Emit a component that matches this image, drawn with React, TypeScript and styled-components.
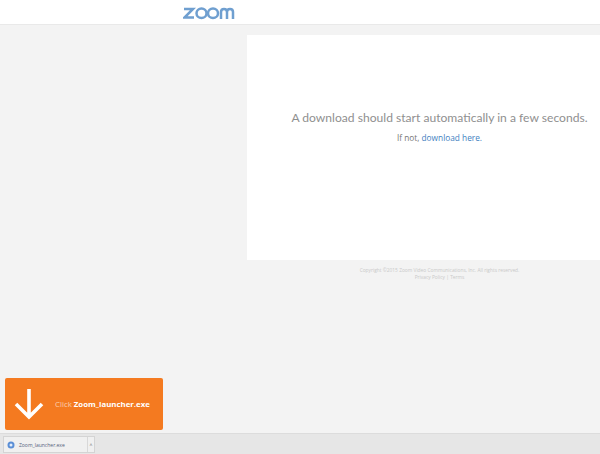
import React from "react";
import styled, { createGlobalStyle } from "styled-components";

const Global = createGlobalStyle`
  html, body { margin: 0; padding: 0; width: 600px; height: 454px; overflow: hidden; background: #f3f3f3; }
  #root { width: 600px; height: 454px; }
`;

const Page = styled.div`
  position: relative;
  width: 600px;
  height: 454px;
  display: flex;
  flex-direction: column;
  background: #f3f3f3;
  font-family: "Open Sans", "Liberation Sans", sans-serif;
`;

const Header = styled.header`
  flex: none;
  background: #fff;
  border-bottom: 1px solid #e9e9e9;
  padding: 3px 0 0 183px;
  box-sizing: content-box;
  height: 21px;
`;

const Main = styled.main`
  flex: 1;
  padding: 10px 0 0 247px;
  display: flex;
  flex-direction: column;
`;

const Card = styled.section`
  height: 225px;
  background: #fff;
  display: flex;
  flex-direction: column;
  align-items: center;
  padding-top: 73px;
  box-sizing: border-box;
`;

const Headline = styled.h1`
  margin: 0 0 0 32px;
  font-family: "Lato", "Open Sans", sans-serif;
  font-size: 12.1px;
  line-height: 20px;
  font-weight: 400;
  color: #8f8f8f;
  white-space: nowrap;
`;

const Sub = styled.p`
  margin: 3px 0 0 32px;
  font-size: 8.3px;
  line-height: 14px;
  color: #777;
  white-space: nowrap;
`;

const Link = styled.a`
  color: #3f7fbf;
`;

const Footer = styled.footer`
  margin: 7px 0 0 32px;
  text-align: center;
  font-size: 4.85px;
  line-height: 7px;
  color: #c9c9c9;
  white-space: nowrap;
`;

const DownloadBar = styled.div`
  height: 21px;
  flex: none;
  background: #e6e6e6;
  border-top: 1px solid #dcdcdc;
  box-sizing: border-box;
  padding: 2px 0 0 3px;
  display: flex;
`;

const FileChip = styled.div`
  width: 92px;
  height: 17px;
  box-sizing: border-box;
  background: #f0f0f0;
  border: 1px solid #d4d4d4;
  display: flex;
  align-items: center;
  padding-left: 3px;
  gap: 4px;
  font-size: 5px;
  color: #54607a;
  position: relative;
`;

const ChipCaret = styled.span`
  position: absolute;
  right: 0;
  top: 0;
  bottom: 0;
  width: 6px;
  border-left: 1px solid #d8d8d8;
  display: flex;
  align-items: center;
  justify-content: center;
  font-size: 5px;
  color: #777;
`;

const Callout = styled.div`
  position: absolute;
  left: 5px;
  top: 378px;
  width: 158px;
  height: 52px;
  background: #f47a20;
  border-radius: 2px;
  display: flex;
  align-items: center;
  padding-left: 9px;
  box-sizing: border-box;
  gap: 11px;
  font-size: 7.85px;
  color: #fbcfae;
  white-space: nowrap;
`;

const Strong = styled.b`
  color: #fff;
  font-weight: 700;
`;

export default function App() {
  return (
    <Page>
      <Global />
      <Header>
        <svg width="52" height="14" viewBox="0 0 52 14" fill="none" stroke="#6f9fd0" strokeWidth="2.5" aria-label="zoom">
          <path d="M1 3h9L1.5 11.5H11" />
          <ellipse cx="18.5" cy="7.2" rx="5" ry="4.8" />
          <ellipse cx="30" cy="7.2" rx="5" ry="4.8" />
          <path d="M38 13V6q0-3 3-3t3 3v7M44 6q0-3 3-3t3 3v7" />
        </svg>
      </Header>
      <Main>
        <Card>
          <Headline>A download should start automatically in a few seconds.</Headline>
          <Sub>
            If not, <Link>download here.</Link>
          </Sub>
        </Card>
        <Footer>
          Copyright ©2015 Zoom Video Communications, Inc. All rights reserved.
          <br />
          Privacy Policy | Terms
        </Footer>
      </Main>
      <DownloadBar>
        <FileChip>
          <svg width="8" height="8" viewBox="0 0 8 8">
            <circle cx="4" cy="4" r="3.5" fill="#5b8fd6" />
            <circle cx="4" cy="4" r="1.5" fill="#e4eefa" />
          </svg>
          Zoom_launcher.exe
          <ChipCaret>˄</ChipCaret>
        </FileChip>
      </DownloadBar>
      <Callout>
        <svg width="30" height="32" viewBox="0 0 30 32" fill="none" stroke="#fff" strokeWidth="3.6">
          <path d="M15 1v28M2 16l13 13 13-13" />
        </svg>
        <span>
          Click <Strong>Zoom_launcher.exe</Strong>
        </span>
      </Callout>
    </Page>
  );
}
